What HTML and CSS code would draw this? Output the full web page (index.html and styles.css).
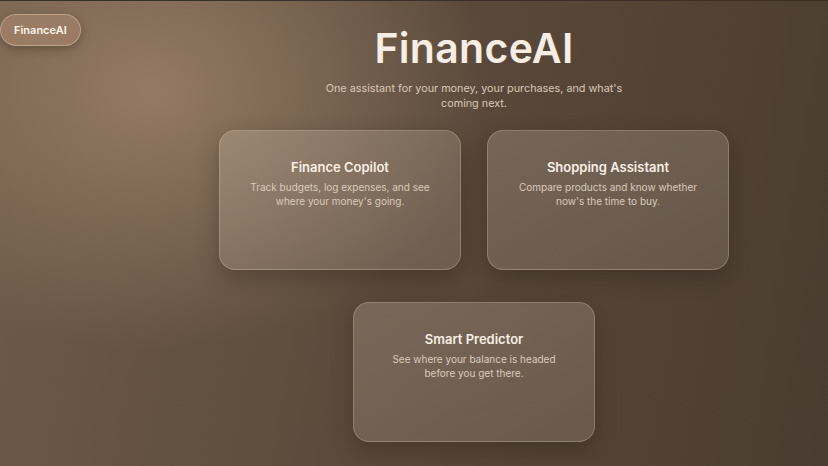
FILE: index.html
```html
<!DOCTYPE html>
<html lang="en">
<head>
  <meta charset="UTF-8" />
  <meta name="viewport" content="width=device-width, initial-scale=1.0" />
  <title>FinanceAI</title>
  <link rel="stylesheet" href="styles.css">
</head>
<body>

  <aside class="side">
    <button class="brand">FinanceAI</button>
  </aside>

  <main class="home">
    <h1>FinanceAI</h1>
    <p class="tagline">One assistant for your money, your purchases, and what's coming next.</p>

    <div class="tools">
      <a class="tool" href="#copilot">
        <h2>Finance Copilot</h2>
        <p>Track budgets, log expenses, and see where your money's going.</p>
      </a>
      <a class="tool" href="#shopping">
        <h2>Shopping Assistant</h2>
        <p>Compare products and know whether now's the time to buy.</p>
      </a>
      <a class="tool wide" href="#predictor">
        <h2>Smart Predictor</h2>
        <p>See where your balance is headed before you get there.</p>
      </a>
    </div>
  </main>

</body>
</html>
```

FILE: styles.css
```css
html, body {
  height: 100%;
}

body {
  margin: 0;
  display: flex;
  font-family: "Inter", "Noto Sans", sans-serif;
  color: #f3e9dd;
  border-top: 1px solid #3b3027;
  box-sizing: border-box;
  background:
    radial-gradient(ellipse 340px 260px at 150px 90px, rgba(152, 127, 104, 0.9), rgba(152, 127, 104, 0) 100%),
    linear-gradient(100deg, #6e5a48 0%, #5c4b3c 45%, #4a3c30 100%);
  overflow: hidden;
}

.side {
  width: 120px;
  flex: none;
  padding-top: 13px;
}

.brand {
  font-family: inherit;
  font-size: 11px;
  font-weight: 600;
  color: #fbf4ec;
  background: #9a7b63;
  border: 1px solid rgba(255, 236, 215, 0.35);
  border-radius: 999px;
  padding: 8px 13px;
  box-shadow: 0 3px 10px rgba(40, 28, 18, 0.35);
  cursor: pointer;
}

.home {
  flex: 1;
  display: flex;
  flex-direction: column;
  align-items: center;
  padding-top: 22px;
}

h1 {
  margin: 0;
  font-size: 41px;
  font-weight: 600;
  letter-spacing: 0.3px;
  color: #f7ede2;
}

.tagline {
  margin: 8px 0 0;
  width: 320px;
  text-align: center;
  font-size: 10.8px;
  line-height: 15px;
  color: #d9c8b6;
}

.tools {
  margin-top: 19px;
  display: grid;
  grid-template-columns: 242px 242px;
  gap: 32px 26px;
}

.tool {
  height: 140px;
  box-sizing: border-box;
  padding: 28px 30px 0;
  text-align: center;
  text-decoration: none;
  color: inherit;
  background: linear-gradient(170deg, rgba(255, 240, 225, 0.18), rgba(255, 240, 225, 0.13));
  border: 1px solid rgba(255, 236, 215, 0.22);
  border-radius: 16px;
  box-shadow: 0 8px 22px rgba(30, 20, 12, 0.3);
}

.tool.wide {
  grid-column: 1 / -1;
  justify-self: center;
  width: 242px;
}

.tool h2 {
  margin: 0;
  font-size: 13px;
  font-weight: 600;
  color: #f8efe5;
}

.tool p {
  margin: 5px 0 0;
  font-size: 10px;
  line-height: 14px;
  color: #dacbbb;
}
```
